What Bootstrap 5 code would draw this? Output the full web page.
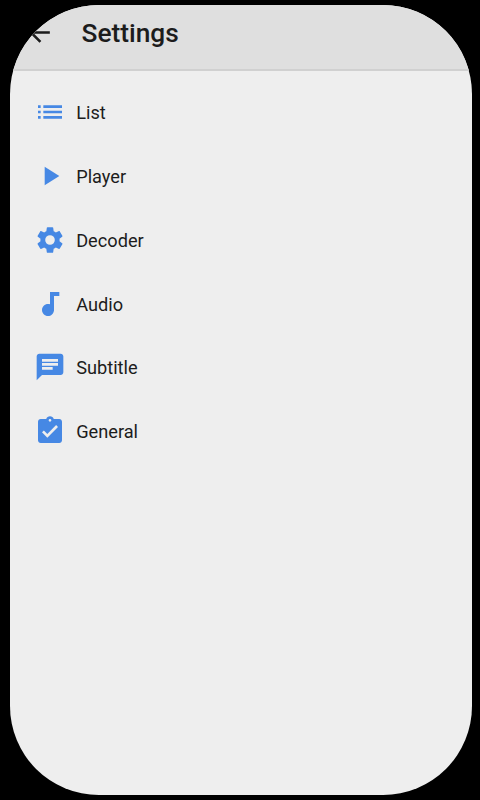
<!DOCTYPE html>
<html lang="en">
<head>
<meta charset="utf-8">
<meta name="viewport" content="width=device-width, initial-scale=1">
<title>Settings</title>
<link href="https://cdn.jsdelivr.net/npm/bootstrap@5.3.0/dist/css/bootstrap.min.css" rel="stylesheet">
<style>
body { background: #000; font-family: Roboto, sans-serif; color: #1c1c1c; }
.screen { width: 462px; height: 790px; margin: 5px 8px 5px 10px; border-radius: 89px; background: #eee; }
.topbar { height: 66px; background: #dfdfdf; border-bottom: 2px solid #d0d0d0; padding: 0 0 8px 13.5px; }
.topbar svg { margin-top: -1px; }
.topbar h1 { font-size: 26.3px; font-weight: 500; line-height: 32px; margin: 0 0 0 27px; }
.menu { padding-top: 10.2px; }
.entry { height: 63.75px; padding-left: 23.5px; gap: 10.7px; font-size: 18.2px; color: #1c1c1c; }
.entry svg { width: 32px; height: 32px; margin-top: -1.5px; fill: #4688e4; flex: none; }
</style>
</head>
<body>
<main class="screen overflow-hidden">
  <header class="topbar d-flex align-items-center">
    <svg width="31" height="31" viewBox="0 0 24 24" fill="#1c1c1c"><path d="M20 11H7.83l5.59-5.59L12 4l-8 8 8 8 1.41-1.41L7.83 13H20z"/></svg>
    <h1>Settings</h1>
  </header>
  <nav class="menu d-flex flex-column">
    <a class="entry d-flex align-items-center text-decoration-none"><svg viewBox="0 0 24 24"><path d="M3 13h2v-2H3zm0 4h2v-2H3zm0-8h2V7H3zm4 4h14v-2H7zm0 4h14v-2H7zM7 7v2h14V7z"/></svg>List</a>
    <a class="entry d-flex align-items-center text-decoration-none"><svg viewBox="0 0 24 24"><path d="M8 5v14l11-7z"/></svg>Player</a>
    <a class="entry d-flex align-items-center text-decoration-none"><svg viewBox="0 0 24 24"><path d="M19.14 12.94c.04-.3.06-.61.06-.94 0-.32-.02-.64-.07-.94l2.03-1.58c.18-.14.23-.41.12-.61l-1.92-3.32c-.12-.22-.37-.29-.59-.22l-2.39.96c-.5-.38-1.03-.7-1.62-.94l-.36-2.54c-.04-.24-.24-.41-.48-.41h-3.84c-.24 0-.43.17-.47.41l-.36 2.54c-.59.24-1.13.57-1.62.94l-2.39-.96c-.22-.08-.47 0-.59.22L2.74 8.87c-.12.21-.08.47.12.61l2.03 1.58c-.05.3-.09.63-.09.94s.02.64.07.94l-2.03 1.58c-.18.14-.23.41-.12.61l1.92 3.32c.12.22.37.29.59.22l2.39-.96c.5.38 1.03.7 1.62.94l.36 2.54c.05.24.24.41.48.41h3.84c.24 0 .44-.17.47-.41l.36-2.54c.59-.24 1.13-.56 1.62-.94l2.39.96c.22.08.47 0 .59-.22l1.92-3.32c.12-.22.07-.47-.12-.61zM12 15.6A3.6 3.6 0 1 1 12 8.4a3.6 3.6 0 0 1 0 7.2z"/></svg>Decoder</a>
    <a class="entry d-flex align-items-center text-decoration-none"><svg viewBox="0 0 24 24"><path d="M12 3v9.28c-.47-.17-.97-.28-1.5-.28C8.01 12 6 14.01 6 16.5S8.01 21 10.5 21c2.31 0 4.2-1.75 4.45-4H15V6h4V3z"/></svg>Audio</a>
    <a class="entry d-flex align-items-center text-decoration-none"><svg viewBox="0 0 24 24"><path d="M20 2H4c-1.1 0-1.99.9-1.99 2L2 22l4-4h14c1.1 0 2-.9 2-2V4c0-1.1-.9-2-2-2zM6 9h12v2H6zm8 5H6v-2h8zm4-6H6V6h12z"/></svg>Subtitle</a>
    <a class="entry d-flex align-items-center text-decoration-none"><svg viewBox="0 0 24 24"><path d="M19 3h-4.18C14.4 1.84 13.3 1 12 1s-2.4.84-2.82 2H5c-1.1 0-2 .9-2 2v14c0 1.1.9 2 2 2h14c1.1 0 2-.9 2-2V5c0-1.1-.9-2-2-2zm-7 0c.55 0 1 .45 1 1s-.45 1-1 1-1-.45-1-1 .45-1 1-1zm-2 14-4-4 1.41-1.41L10 14.17l6.59-6.59L18 9z"/></svg>General</a>
  </nav>
</main>
<script src="https://cdn.jsdelivr.net/npm/bootstrap@5.3.0/dist/js/bootstrap.bundle.min.js"></script>
</body>
</html>
